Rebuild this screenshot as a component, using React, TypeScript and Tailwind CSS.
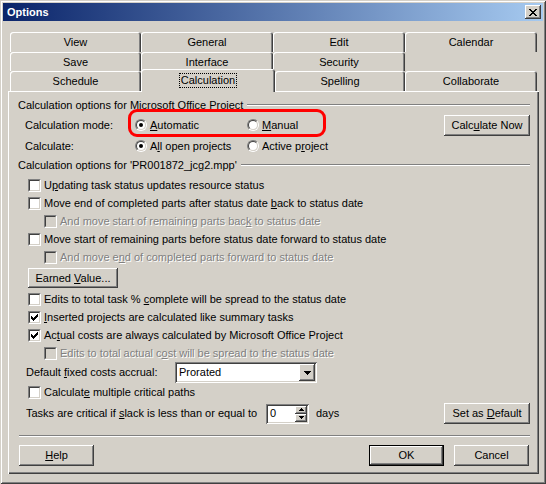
import React from 'react';

const RAISED =
  'bg-[#d4d0c8] shadow-[inset_-1px_-1px_#404040,inset_1px_1px_#ffffff,inset_-2px_-2px_#808080]';
const SUNKEN =
  'bg-white shadow-[inset_1px_1px_#808080,inset_-1px_-1px_#ffffff,inset_2px_2px_#404040,inset_-2px_-2px_#d4d0c8]';
const DISABLED = 'text-[#808080] [text-shadow:1px_1px_0_#ffffff]';

function U({ c }: { c: string }) {
  return <span className="underline underline-offset-[1px]">{c}</span>;
}

function Tab({ label, w, selected }: { label?: string; w: string; selected?: boolean }) {
  if (!label) return <div className={w} />;
  return (
    <div
      className={`${w} flex items-center justify-center rounded-t-[3px] bg-[#d4d0c8] ${
        selected
          ? 'h-[23px] -mb-[1px] relative z-10 shadow-[inset_1px_1px_#ffffff,inset_-1px_0_#404040,inset_-2px_0_#808080]'
          : 'h-full shadow-[inset_1px_1px_#ffffff,inset_-1px_0_#404040,inset_-2px_0_#808080]'
      }`}
    >
      {selected ? (
        <span className="border border-dotted border-black px-[1px] leading-[13px] -mt-[1px]">{label}</span>
      ) : (
        <span className="pt-[1px]">{label}</span>
      )}
    </div>
  );
}

function Radio({ checked }: { checked?: boolean }) {
  return (
    <span className="inline-flex w-[12px] h-[12px] shrink-0 rounded-full border border-t-[#808080] border-l-[#808080] border-r-white border-b-white">
      <span className="flex-1 flex items-center justify-center rounded-full border border-t-[#404040] border-l-[#404040] border-r-[#d4d0c8] border-b-[#d4d0c8] bg-white">
        {checked && <span className="w-[4px] h-[4px] rounded-full bg-black" />}
      </span>
    </span>
  );
}

function Check() {
  const cols = [2, 3, 4, 3, 2, 1, 0];
  return (
    <svg width="7" height="7" viewBox="0 0 7 7" shapeRendering="crispEdges">
      {cols.map((y, x) => (
        <rect key={x} x={x} y={y} width="1" height="3" fill="#000" />
      ))}
    </svg>
  );
}

function Box({ checked, disabled }: { checked?: boolean; disabled?: boolean }) {
  return (
    <span className="inline-flex w-[13px] h-[13px] shrink-0 border border-t-[#808080] border-l-[#808080] border-r-white border-b-white">
      <span
        className={`flex-1 flex items-center justify-center border border-t-[#404040] border-l-[#404040] border-r-[#d4d0c8] border-b-[#d4d0c8] ${
          disabled ? 'bg-[#d4d0c8]' : 'bg-white'
        }`}
      >
        {checked && <Check />}
      </span>
    </span>
  );
}

function CheckRow({
  children, checked, disabled, indent,
}: {
  children: React.ReactNode; checked?: boolean; disabled?: boolean; indent?: boolean;
}) {
  return (
    <div className={`h-[18px] flex items-center ${indent ? 'pl-[36px]' : 'pl-[20px]'}`}>
      <Box checked={checked} disabled={disabled} />
      <span className={`ml-[3px] whitespace-nowrap ${disabled ? DISABLED : ''}`}>{children}</span>
    </div>
  );
}

function Group({ children }: { children: React.ReactNode }) {
  return (
    <div className="h-[18px] flex items-center pl-[10px] pr-[9px] gap-[4px]">
      <span className="whitespace-nowrap">{children}</span>
      <span className="flex-1 h-[2px] border-t border-t-[#808080] border-b border-b-white" />
    </div>
  );
}

function Button({
  children, className = '', isDefault,
}: {
  children: React.ReactNode; className?: string; isDefault?: boolean;
}) {
  if (isDefault) {
    return (
      <div className={`${className} flex border border-black`}>
        <div className={`flex-1 flex items-center justify-center ${RAISED}`}>{children}</div>
      </div>
    );
  }
  return <div className={`${className} flex items-center justify-center ${RAISED}`}>{children}</div>;
}

function CloseGlyph() {
  const rows: [number, number][][] = [
    [[0, 2], [6, 2]],
    [[1, 2], [5, 2]],
    [[2, 4]],
    [[3, 2]],
    [[2, 4]],
    [[1, 2], [5, 2]],
    [[0, 2], [6, 2]],
  ];
  return (
    <svg width="8" height="7" viewBox="0 0 8 7" shapeRendering="crispEdges">
      {rows.map((segs, y) =>
        segs.map(([x, w]) => <rect key={`${y}-${x}`} x={x} y={y} width={w} height="1" fill="#000" />)
      )}
    </svg>
  );
}

function Arrow({ up }: { up?: boolean }) {
  return (
    <svg width="5" height="3" viewBox="0 0 5 3" shapeRendering="crispEdges">
      {up ? (
        <>
          <rect x="2" y="0" width="1" height="1" fill="#000" />
          <rect x="1" y="1" width="3" height="1" fill="#000" />
          <rect x="0" y="2" width="5" height="1" fill="#000" />
        </>
      ) : (
        <>
          <rect x="0" y="0" width="5" height="1" fill="#000" />
          <rect x="1" y="1" width="3" height="1" fill="#000" />
          <rect x="2" y="2" width="1" height="1" fill="#000" />
        </>
      )}
    </svg>
  );
}

export default function App() {
  return (
    <div className="relative w-[546px] h-[484px] p-[3px] bg-[#d4d0c8] text-black text-[11px] leading-none font-['Liberation_Sans',Arial,sans-serif] shadow-[inset_1px_1px_#d4d0c8,inset_-1px_-1px_#404040,inset_2px_2px_#ffffff,inset_-2px_-2px_#808080] overflow-hidden select-none">
      {/* Title bar */}
      <div className="h-[18px] flex items-center bg-[linear-gradient(90deg,#0a246a,#a6caf0)]">
        <span className="pl-[4px] text-white font-bold">Options</span>
        <div className={`ml-auto mr-[2px] w-[16px] h-[14px] flex items-center justify-center ${RAISED}`}>
          <CloseGlyph />
        </div>
      </div>

      {/* Tabs */}
      <div className="mt-[11px] pl-[7px]">
        <div className="flex h-[20px]">
          <Tab label="View" w="w-[131px]" />
          <Tab label="General" w="w-[132px]" />
          <Tab label="Edit" w="w-[132px]" />
          <Tab label="Calendar" w="w-[132px]" />
        </div>
        <div className="flex h-[19px]">
          <Tab label="Save" w="w-[131px]" />
          <Tab label="Interface" w="w-[132px]" />
          <Tab label="Security" w="w-[132px]" />
          <Tab w="w-[132px]" />
        </div>
        <div className="flex h-[20px] items-end">
          <Tab label="Schedule" w="w-[131px]" />
          <Tab label="Calculation" w="w-[134px]" selected />
          <Tab label="Spelling" w="w-[130px]" />
          <Tab label="Collaborate" w="w-[132px]" />
        </div>
      </div>

      {/* Panel */}
      <div className="ml-[5px] w-[531px] h-[383px] flex flex-col pt-[5px] shadow-[inset_1px_1px_#ffffff,inset_-1px_-1px_#404040,inset_-2px_-2px_#808080]">
        <Group>Calculation options for Microsoft Office Project</Group>

        <div className="h-[22px] flex items-center pl-[17px] pr-[9px]">
          <span className="w-[110px]">Calculation mode:</span>
          <span className="w-[112px] flex items-center gap-[3px]">
            <Radio checked />
            <span><U c="A" />utomatic</span>
          </span>
          <span className="flex items-center gap-[3px]">
            <Radio />
            <span><U c="M" />anual</span>
          </span>
          <Button className="ml-auto w-[86px] h-[21px]">
            <span>Calc<U c="u" />late Now</span>
          </Button>
        </div>

        <div className="mt-[1px] h-[18px] flex items-center pl-[17px]">
          <span className="w-[110px]">Calculate:</span>
          <span className="w-[112px] flex items-center gap-[3px]">
            <Radio checked />
            <span>A<U c="l" />l open projects</span>
          </span>
          <span className="flex items-center gap-[3px]">
            <Radio />
            <span>Active p<U c="r" />oject</span>
          </span>
        </div>

        <div className="mt-[1px]">
          <Group>Calculation options for 'PR001872_jcg2.mpp'</Group>
        </div>

        <div className="mt-[2px]">
          <CheckRow>U<U c="p" />dating task status updates resource status</CheckRow>
          <CheckRow>Move end of completed parts after status date <U c="b" />ack to status date</CheckRow>
          <CheckRow indent disabled>And move start of remaining parts bac<U c="k" /> to status date</CheckRow>
          <CheckRow>Move start of remaining parts before status date forward to status date</CheckRow>
          <CheckRow indent disabled>And move e<U c="n" />d of completed parts forward to status date</CheckRow>
        </div>

        <div className="mt-[2px] pl-[20px]">
          <Button className="w-[90px] h-[20px]">
            <span>Earned <U c="V" />alue...</span>
          </Button>
        </div>

        <div className="mt-[2px]">
          <CheckRow>Edits to total task % <U c="c" />omplete will be spread to the status date</CheckRow>
          <CheckRow checked><U c="I" />nserted projects are calculated like summary tasks</CheckRow>
          <CheckRow checked>Ac<U c="t" />ual costs are always calculated by Microsoft Office Project</CheckRow>
          <CheckRow indent disabled>Edits to total actual c<U c="o" />st will be spread to the status date</CheckRow>
        </div>

        <div className="h-[21px] flex items-center pl-[18px]">
          <span className="w-[149px]">Default <U c="f" />ixed costs accrual:</span>
          <div className={`w-[142px] h-[21px] flex items-center p-[2px] ${SUNKEN}`}>
            <span className="flex-1 pl-[2px]">Prorated</span>
            <div className={`w-[16px] h-[17px] flex items-center justify-center ${RAISED}`}>
              <svg width="7" height="4" viewBox="0 0 7 4" shapeRendering="crispEdges">
                <rect x="0" y="0" width="7" height="1" fill="#000" />
                <rect x="1" y="1" width="5" height="1" fill="#000" />
                <rect x="2" y="2" width="3" height="1" fill="#000" />
                <rect x="3" y="3" width="1" height="1" fill="#000" />
              </svg>
            </div>
          </div>
        </div>

        <CheckRow>Calculat<U c="e" /> multiple critical paths</CheckRow>

        <div className="mt-[2px] h-[21px] flex items-center pl-[18px] pr-[9px]">
          <span className="w-[240px]">Tasks are critical if <U c="s" />lack is less than or equal to</span>
          <div className={`w-[43px] h-[20px] flex items-center p-[2px] ${SUNKEN}`}>
            <span className="flex-1 pl-[2px]">0</span>
            <div className="w-[12px] h-[16px] flex flex-col">
              <div className={`h-[8px] flex items-center justify-center ${RAISED}`}>
                <Arrow up />
              </div>
              <div className={`h-[8px] flex items-center justify-center ${RAISED}`}>
                <Arrow />
              </div>
            </div>
          </div>
          <span className="ml-[7px]">days</span>
          <Button className="ml-auto w-[86px] h-[21px]">
            <span>Set as <U c="D" />efault</span>
          </Button>
        </div>

        <div className="mt-[11px] ml-[11px] mr-[9px] h-[2px] border-t border-t-[#808080] border-b border-b-white" />

        <div className="mt-[8px] flex items-center pl-[11px] pr-[10px]">
          <Button className="w-[75px] h-[21px]">
            <span><U c="H" />elp</span>
          </Button>
          <Button className="ml-auto w-[75px] h-[21px]" isDefault>
            <span>OK</span>
          </Button>
          <Button className="ml-[10px] w-[75px] h-[21px]">
            <span>Cancel</span>
          </Button>
        </div>
      </div>

      {/* Red annotation */}
      <div className="absolute left-[128px] top-[109px] w-[198px] h-[28px] border-[3px] border-[#ff0000] rounded-[9px] pointer-events-none" />
    </div>
  );
}
